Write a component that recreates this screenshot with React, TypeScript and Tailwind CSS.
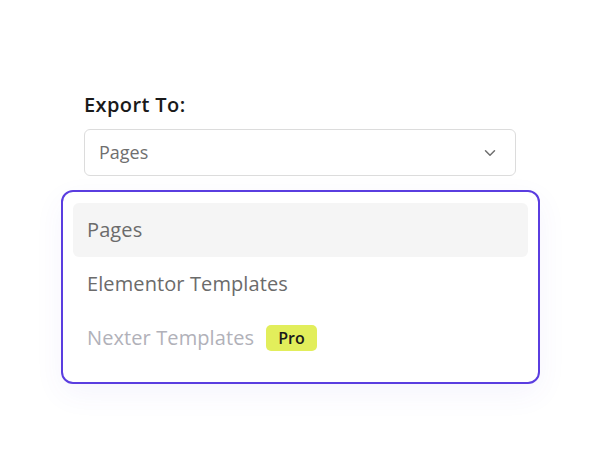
import { ChevronDown } from 'lucide-react';

const OPTIONS = [
  { label: 'Pages', active: true },
  { label: 'Elementor Templates' },
  { label: 'Nexter Templates', pro: true },
];

export default function App() {
  return (
    <div
      className="w-[600px] h-[474px] bg-white pt-[92px] pl-[61px]"
      style={{ fontFamily: '"Open Sans", "Noto Sans", sans-serif' }}
    >
      <div className="w-[479px]">
        <div className="pl-[23px] pr-[24px]">
          <p className="text-[20px] leading-[26px] font-semibold text-[#1a1a1a] tracking-[0.4px]">Export To:</p>
          <div className="mt-[11px] h-[47px] border border-[#dcdcdc] rounded-[6px] flex items-center justify-between pl-[14px] pr-[16px]">
            <span className="text-[18px] text-[#6f6f6f]">Pages</span>
            <ChevronDown size={18} strokeWidth={2} className="text-[#6f6f6f]" />
          </div>
        </div>

        <div className="mt-[14px] h-[194px] border-2 border-[#5a3de0] rounded-[12px] bg-white px-[10px] pt-[11px] shadow-[0_10px_30px_rgba(90,62,224,0.06)]">
          {OPTIONS.map((o) => (
            <div
              key={o.label}
              className={`h-[54px] flex items-center gap-[12px] px-[14px] rounded-[6px] ${o.active ? 'bg-[#f5f5f5]' : ''}`}
            >
              <span
                className={`text-[20px] font-medium tracking-[0.1px] ${o.pro ? 'text-[#b1b1b9]' : 'text-[#6b6b6b]'}`}
              >
                {o.label}
              </span>
              {o.pro && (
                <span className="h-[26px] px-[12px] rounded-[5px] bg-[#e2ee5b] flex items-center text-[16px] font-semibold text-[#1a1a1a]">
                  Pro
                </span>
              )}
            </div>
          ))}
        </div>
      </div>
    </div>
  );
}
